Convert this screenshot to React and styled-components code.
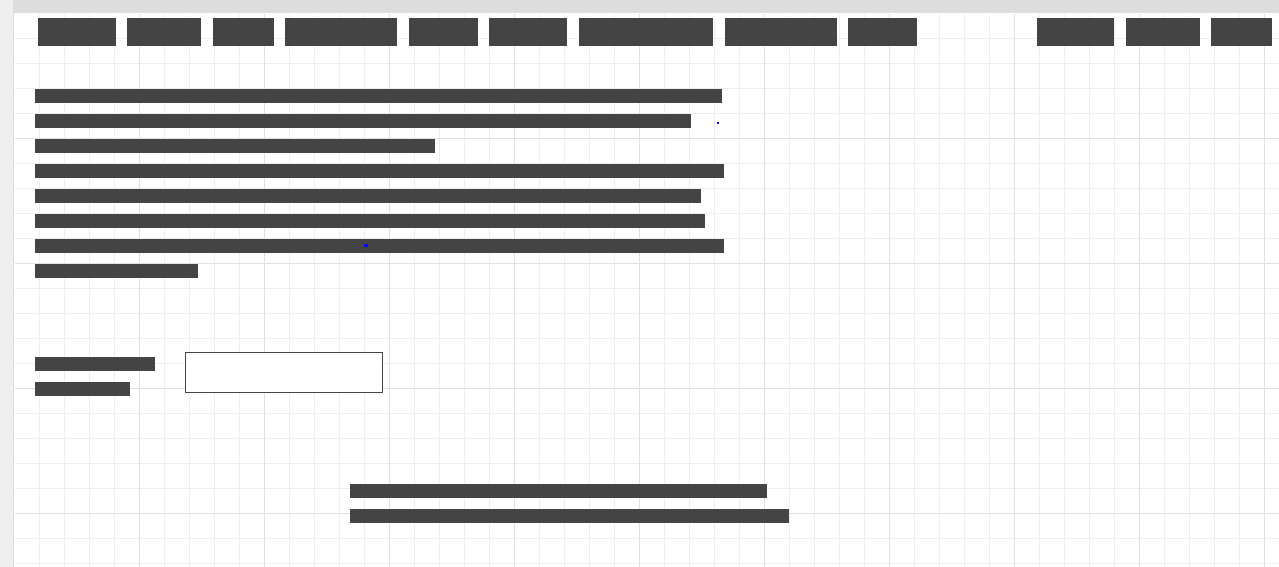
import React from 'react'
import styled, {createGlobalStyle} from 'styled-components'

const GlobalStyle = createGlobalStyle`
  html, body {
    margin: 0;
    padding: 0;
    background: #fff;
  }

  body {
    font-family: "Liberation Sans", Arial, sans-serif;
    overflow: hidden;
  }
`

const navLeft = [
    {w: 78, gap: 0},
    {w: 74, gap: 11},
    {w: 61, gap: 12},
    {w: 112, gap: 11},
    {w: 69, gap: 12},
    {w: 78, gap: 11},
    {w: 134, gap: 12},
    {w: 112, gap: 12},
    {w: 69, gap: 11},
]

const navRight = [
    {w: 77, gap: 0},
    {w: 74, gap: 12},
    {w: 61, gap: 11},
]

const paragraph = [687, 656, 400, 689, 666, 670, 689, 163]

const App = () => {
    return (
        <>
            <GlobalStyle/>
            <Shell>
                <Rail/>
                <Main>
                    <TopBar/>
                    <Canvas>
                        <Grid>
                            <Nav>
                                <NavGroup>
                                    {navLeft.map((item, i) => (
                                        <NavItem key={i} $w={item.w} $gap={item.gap}/>
                                    ))}
                                </NavGroup>
                                <NavGroup $right>
                                    {navRight.map((item, i) => (
                                        <NavItem key={i} $w={item.w} $gap={item.gap}/>
                                    ))}
                                </NavGroup>
                            </Nav>

                            <Paragraph>
                                {paragraph.map((w, i) => (
                                    <Line key={i} $w={w}>
                                        {i === 1 && <Caret $left={682} $top={8} $w={2} $h={2}/>}
                                        {i === 6 && <Caret $left={329} $top={5} $w={4} $h={3}/>}
                                    </Line>
                                ))}
                            </Paragraph>

                            <FormRow>
                                <Labels>
                                    <Label $w={120}/>
                                    <Label $w={95}/>
                                </Labels>
                                <Field type="text" aria-label="field"/>
                            </FormRow>

                            <Footer>
                                <Line $w={417}/>
                                <Line $w={439}/>
                            </Footer>
                        </Grid>
                    </Canvas>
                </Main>
            </Shell>
        </>
    )
}

const Shell = styled.div`
  display: flex;
  min-height: 100vh;
`

const Rail = styled.aside`
  width: 13px;
  flex: none;
  background: #eeeeee;
`

const Main = styled.div`
  flex: 1;
  display: flex;
  flex-direction: column;
`

const TopBar = styled.header`
  height: 13px;
  flex: none;
  background: #dddddd;
`

const Canvas = styled.main`
  flex: 1;
  display: flex;
  flex-direction: column;
  border-left: 1px solid #dddddd;
`

const Grid = styled.div`
  flex: 1;
  border-left: 1px solid #fff;
  border-top: 1px solid #fff;
  background-color: #fff;
  background-image: linear-gradient(to right, transparent 124px, #e0e0e0 124px),
  linear-gradient(to bottom, transparent 124px, #e0e0e0 124px),
  linear-gradient(to right, transparent 24px, #eeeeee 24px),
  linear-gradient(to bottom, transparent 24px, #eeeeee 24px);
  background-size: 125px 125px, 125px 125px, 25px 25px, 25px 25px;
  background-origin: padding-box;
`

const Nav = styled.nav`
  display: flex;
  height: 28px;
  margin: 4px 0 0 23px;
  padding-right: 7px;
`

const NavGroup = styled.div`
  display: flex;
  margin-left: ${props => props.$right ? 'auto' : '0'};
`

const NavItem = styled.a`
  display: block;
  width: ${props => props.$w}px;
  margin-left: ${props => props.$gap}px;
  background: #444444;
`

const Paragraph = styled.section`
  display: flex;
  flex-direction: column;
  gap: 11px;
  margin: 43px 0 0 20px;
`

const Line = styled.span`
  position: relative;
  display: block;
  width: ${props => props.$w}px;
  height: 14px;
  background: #444444;
`

const Caret = styled.i`
  position: absolute;
  left: ${props => props.$left}px;
  top: ${props => props.$top}px;
  width: ${props => props.$w}px;
  height: ${props => props.$h}px;
  background: #0000ff;
`

const FormRow = styled.form`
  display: flex;
  align-items: flex-start;
  margin: 74px 0 0 20px;
`

const Labels = styled.div`
  display: flex;
  flex-direction: column;
  gap: 11px;
  width: 150px;
  padding-top: 5px;
`

const Label = styled.label`
  display: block;
  width: ${props => props.$w}px;
  height: 14px;
  background: #444444;
`

const Field = styled.input`
  box-sizing: border-box;
  width: 198px;
  height: 41px;
  margin: 0;
  padding: 0;
  border: 1px solid #444444;
  border-radius: 0;
  background: #fff;
  outline: none;
`

const Footer = styled.section`
  display: flex;
  flex-direction: column;
  gap: 11px;
  margin: 88px 0 0 335px;
`

export default App
